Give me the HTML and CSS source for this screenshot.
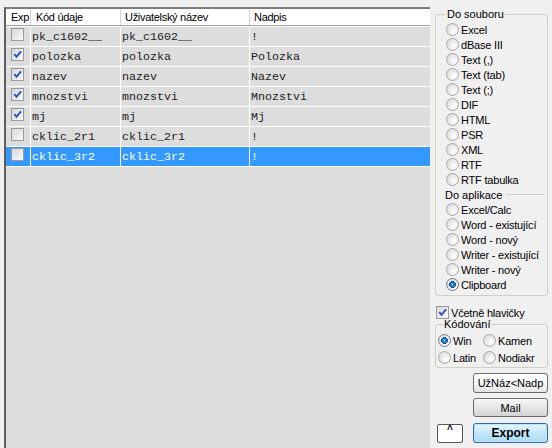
FILE: index.html
```html
<!DOCTYPE html>
<html>
<head>
<meta charset="utf-8">
<link rel="stylesheet" href="styles.css">
</head>
<body>
<div class="app">
  <div class="gridpane">
    <div class="grid">
      <div class="row head">
        <div class="c c1">Exp</div>
        <div class="c c2">Kód údaje</div>
        <div class="c c3">Uživatelský název</div>
        <div class="c c4">Nadpis</div>
      </div>
      <div class="row">
        <div class="c c1"><span class="cb"></span></div>
        <div class="c c2">pk_c1602__</div>
        <div class="c c3">pk_c1602__</div>
        <div class="c c4">!</div>
      </div>
      <div class="row">
        <div class="c c1"><span class="cb"><svg viewBox="0 0 11 11" width="11" height="11"><path d="M2.3 5.2 L4.5 7.8 L9 2.4" fill="none" stroke="#2b54c4" stroke-width="2"/></svg></span></div>
        <div class="c c2">polozka</div>
        <div class="c c3">polozka</div>
        <div class="c c4">Polozka</div>
      </div>
      <div class="row">
        <div class="c c1"><span class="cb"><svg viewBox="0 0 11 11" width="11" height="11"><path d="M2.3 5.2 L4.5 7.8 L9 2.4" fill="none" stroke="#2b54c4" stroke-width="2"/></svg></span></div>
        <div class="c c2">nazev</div>
        <div class="c c3">nazev</div>
        <div class="c c4">Nazev</div>
      </div>
      <div class="row">
        <div class="c c1"><span class="cb"><svg viewBox="0 0 11 11" width="11" height="11"><path d="M2.3 5.2 L4.5 7.8 L9 2.4" fill="none" stroke="#2b54c4" stroke-width="2"/></svg></span></div>
        <div class="c c2">mnozstvi</div>
        <div class="c c3">mnozstvi</div>
        <div class="c c4">Mnozstvi</div>
      </div>
      <div class="row">
        <div class="c c1"><span class="cb"><svg viewBox="0 0 11 11" width="11" height="11"><path d="M2.3 5.2 L4.5 7.8 L9 2.4" fill="none" stroke="#2b54c4" stroke-width="2"/></svg></span></div>
        <div class="c c2">mj</div>
        <div class="c c3">mj</div>
        <div class="c c4">Mj</div>
      </div>
      <div class="row">
        <div class="c c1"><span class="cb"></span></div>
        <div class="c c2">cklic_2r1</div>
        <div class="c c3">cklic_2r1</div>
        <div class="c c4">!</div>
      </div>
      <div class="row sel">
        <div class="c c1"><span class="cb"></span></div>
        <div class="c c2">cklic_3r2</div>
        <div class="c c3">cklic_3r2</div>
        <div class="c c4">!</div>
      </div>
    </div>
  </div>

  <div class="panel">
    <fieldset class="group main">
      <legend>Do souboru</legend>
      <div class="opt"><span class="rb"></span>Excel</div>
      <div class="opt"><span class="rb"></span>dBase III</div>
      <div class="opt"><span class="rb"></span>Text (,)</div>
      <div class="opt"><span class="rb"></span>Text (tab)</div>
      <div class="opt"><span class="rb"></span>Text (;)</div>
      <div class="opt"><span class="rb"></span>DIF</div>
      <div class="opt"><span class="rb"></span>HTML</div>
      <div class="opt"><span class="rb"></span>PSR</div>
      <div class="opt"><span class="rb"></span>XML</div>
      <div class="opt"><span class="rb"></span>RTF</div>
      <div class="opt"><span class="rb"></span>RTF tabulka</div>
      <div class="sub"><span>Do aplikace</span><i class="line"></i></div>
      <div class="opt"><span class="rb"></span>Excel/Calc</div>
      <div class="opt"><span class="rb"></span>Word - existující</div>
      <div class="opt"><span class="rb"></span>Word - nový</div>
      <div class="opt"><span class="rb"></span>Writer - existující</div>
      <div class="opt"><span class="rb"></span>Writer - nový</div>
      <div class="opt"><span class="rb on"></span>Clipboard</div>
    </fieldset>

    <div class="check"><span class="cb"><svg viewBox="0 0 11 11" width="11" height="11"><path d="M2.3 5.2 L4.5 7.8 L9 2.4" fill="none" stroke="#2b54c4" stroke-width="2"/></svg></span>Včetně hlavičky</div>

    <fieldset class="group enc">
      <legend>Kódování</legend>
      <div class="encgrid">
        <div class="opt"><span class="rb on"></span>Win</div>
        <div class="opt"><span class="rb"></span>Kamen</div>
        <div class="opt"><span class="rb"></span>Latin</div>
        <div class="opt"><span class="rb"></span>Nodiakr</div>
      </div>
    </fieldset>

    <div class="buttons">
      <button class="btn uz">UžNáz&lt;Nadp</button>
      <button class="btn mail">Mail</button>
      <div class="lastrow">
        <button class="btn up">^</button>
        <button class="btn export">Export</button>
      </div>
    </div>
  </div>
</div>
</body>
</html>
```

FILE: styles.css
```css
* { box-sizing: border-box; }
html, body { margin: 0; padding: 0; }
body {
  width: 552px;
  height: 448px;
  overflow: hidden;
  background: #f0f0f0;
  font-family: "Liberation Sans", Arial, sans-serif;
  font-size: 11px;
  color: #000;
}
.app { display: flex; height: 448px; }

/* ---------- grid ---------- */
.gridpane {
  width: 430px;
  flex: none;
  padding: 7px 0 0 4px;
  display: flex;
  flex-direction: column;
}
.grid {
  flex: 1;
  background: #dddddd;
  border-top: 2px solid #7c7c7c;
  border-left: 2px solid #5f5f5f;
}
.row {
  display: flex;
  height: 20px;
  border-top: 1px solid #fff;
  color: #1e1e1e;
}
.row.head {
  height: 17px;
  background: #fff;
  border-top: 0;
  border-bottom: 1px solid #a0a0a0;
  color: #000;
}
.row.sel {
  height: 21px;
  background: #3399ff;
  color: #fff;
  border-bottom: 1px solid #fff;
}
.c {
  flex: none;
  height: 100%;
  border-right: 1px solid #fff;
  padding-left: 1px;
  font-family: "Liberation Mono", "Courier New", monospace;
  font-size: 11.67px;
  line-height: 20px;
  white-space: nowrap;
  overflow: hidden;
}
.c1 { width: 25px; padding-left: 5px; padding-top: 1px; }
.c2 { width: 90px; }
.c3 { width: 129px; }
.c4 { flex: 1; border-right: 0; }
.head .c {
  font-family: "Liberation Sans", Arial, sans-serif;
  font-size: 11px;
  line-height: 16px;
  padding-top: 0;
  padding-left: 4px;
  letter-spacing: -0.3px;
  border-right-color: #d4d4d4;
}
.head .c1 { padding-left: 5px; }
.head .c2 { padding-left: 5px; }

/* ---------- checkbox & radio ---------- */
.cb {
  display: block;
  width: 13px;
  height: 13px;
  border: 1px solid #9a9a9a;
  background: linear-gradient(135deg, #d6d6d6, #fbfbfb);
}
.cb svg { display: block; }
.rb {
  flex: none;
  display: block;
  width: 13px;
  height: 13px;
  border-radius: 50%;
  border: 1px solid #a8a8a8;
  background: radial-gradient(circle at 65% 65%, #ffffff 0, #f0f0f0 35%, #d2d2d2 100%);
  margin-right: 2px;
}
.rb.on {
  border-color: #6b7d8f;
  background:
    radial-gradient(circle at 50% 50%, #7fc6f3 0, #2a86d2 1.5px, #0c4d92 3.2px, transparent 3.6px),
    radial-gradient(circle at 65% 65%, #ffffff 0, #f0f0f0 35%, #d2d2d2 100%);
}

/* ---------- side panel ---------- */
.panel {
  width: 122px;
  flex: none;
  padding: 8px 4px 0 5px;
  display: flex;
  flex-direction: column;
}
.group {
  margin: 0;
  min-width: 0;
  border: 1px solid #d0d0bf;
  border-radius: 3px;
}
.group legend {
  padding: 0 1px;
  line-height: 13px;
}
.main { padding: 1px 0 3px 10px; }
.opt {
  display: flex;
  align-items: center;
  height: 15px;
  white-space: nowrap;
  letter-spacing: -0.2px;
}
.sub {
  display: flex;
  align-items: center;
  height: 15px;
  margin-left: -1px;
}
.sub .line {
  flex: 1;
  border-top: 1px solid #d0d0bf;
  margin: 0 3px 0 4px;
}
.check {
  display: flex;
  align-items: center;
  height: 13px;
  margin-top: 10px;
  padding-left: 1px;
  letter-spacing: -0.2px;
}
.check .cb { margin-right: 2px; }
.enc { padding: 3px 0 0 2px; }
.enc legend { line-height: 11px; margin-left: 5px; }
.encgrid {
  display: grid;
  grid-template-columns: 45px 1fr;
  grid-auto-rows: 17px;
}

/* ---------- buttons ---------- */
.buttons {
  display: flex;
  flex-direction: column;
  align-items: flex-end;
  margin-top: 5px;
}
.btn {
  font-family: "Liberation Sans", Arial, sans-serif;
  font-size: 11px;
  color: #000;
  padding: 0;
  border: 1px solid #6a6a6a;
  border-radius: 3px;
  background: linear-gradient(#ffffff, #f4f4f4 60%, #e4e4e4);
}
.uz { width: 75px; height: 20px; }
.mail {
  width: 75px;
  height: 19px;
  margin-top: 5px;
  background: linear-gradient(#f7f7f7, #e6e6e6 50%, #d3d3d3);
}
.lastrow {
  display: flex;
  align-self: stretch;
  justify-content: space-between;
  align-items: flex-start;
  margin-top: 6px;
  padding-left: 2px;
}
.up {
  width: 26px;
  height: 19px;
  margin-top: 1px;
  background: #fff;
  border-color: #555;
  border-radius: 2px;
  font-size: 10px;
  font-weight: bold;
  line-height: 10px;
  padding-bottom: 7px;
}
.export {
  width: 75px;
  height: 20px;
  font-size: 12px;
  font-weight: bold;
  border-color: #2f6aa6;
  background: linear-gradient(#e6f6fd, #c3e6f8 50%, #a9daf4);
  box-shadow: inset 0 0 0 1px #bfe3f7;
}
```
